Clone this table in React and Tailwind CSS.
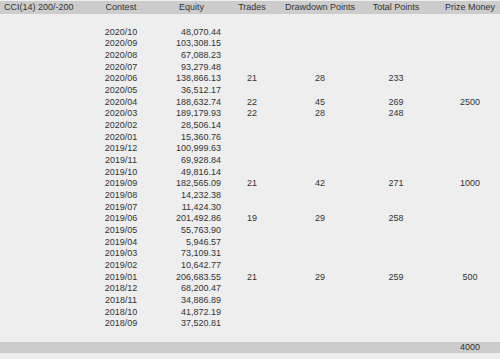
const rows = [
  ['2020/10', '48,070.44'],
  ['2020/09', '103,308.15'],
  ['2020/08', '67,088.23'],
  ['2020/07', '93,279.48'],
  ['2020/06', '138,866.13', '21', '28', '233'],
  ['2020/05', '36,512.17'],
  ['2020/04', '188,632.74', '22', '45', '269', '2500'],
  ['2020/03', '189,179.93', '22', '28', '248'],
  ['2020/02', '28,506.14'],
  ['2020/01', '15,360.76'],
  ['2019/12', '100,999.63'],
  ['2019/11', '69,928.84'],
  ['2019/10', '49,816.14'],
  ['2019/09', '182,565.09', '21', '42', '271', '1000'],
  ['2019/08', '14,232.38'],
  ['2019/07', '11,424.30'],
  ['2019/06', '201,492.86', '19', '29', '258'],
  ['2019/05', '55,763.90'],
  ['2019/04', '5,946.57'],
  ['2019/03', '73,109.31'],
  ['2019/02', '10,642.77'],
  ['2019/01', '206,683.55', '21', '29', '259', '500'],
  ['2018/12', '68,200.47'],
  ['2018/11', '34,886.89'],
  ['2018/10', '41,872.19'],
  ['2018/09', '37,520.81'],
];

const grid = 'grid grid-cols-[92px_58px_74px_56px_80px_72px_68px]';

export default function App() {
  return (
    <div
      className="w-[500px] h-[359px] bg-[#eeeeee] pt-[1px] text-[9px] text-[#333333] overflow-hidden"
      style={{ fontFamily: '"Liberation Sans", Arial, sans-serif' }}
    >
      {/* header */}
      <div className={`${grid} h-[13px] items-center bg-[#cccccc] leading-[13px]`}>
        <div className="pl-[4px] whitespace-nowrap">CCI(14) 200/-200</div>
        <div className="text-center">Contest</div>
        <div className="text-center pl-[9px]">Equity</div>
        <div className="text-center">Trades</div>
        <div className="text-center whitespace-nowrap">Drawdown Points</div>
        <div className="text-center whitespace-nowrap">Total Points</div>
        <div className="text-center pl-[8px] whitespace-nowrap">Prize Money</div>
      </div>

      <div className="pt-[12.5px] pb-[11.8px]">
        {rows.map(([contest, equity, trades, dd, total, prize]) => (
          <div key={contest} className={`${grid} h-[11.68px] leading-[11.68px]`}>
            <div />
            <div className="text-center">{contest}</div>
            <div className="text-right pr-[3px]">{equity}</div>
            <div className="text-center">{trades}</div>
            <div className="text-center">{dd}</div>
            <div className="text-center">{total}</div>
            <div className="text-center pl-[8px]">{prize}</div>
          </div>
        ))}
      </div>

      {/* totals */}
      <div className={`${grid} h-[11px] items-center bg-[#cccccc] leading-[11px]`}>
        <div />
        <div />
        <div />
        <div />
        <div />
        <div />
        <div className="text-center pl-[8px]">4000</div>
      </div>
    </div>
  );
}
